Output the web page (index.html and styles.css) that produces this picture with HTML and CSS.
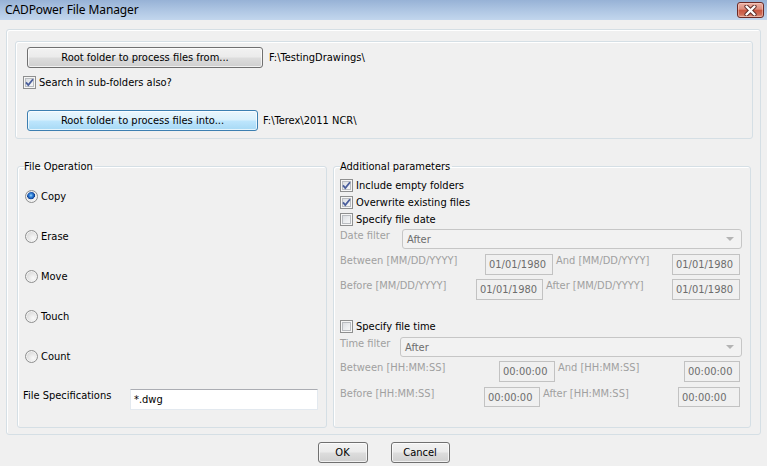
FILE: index.html
```html
<!DOCTYPE html>
<html lang="en">
<head>
<meta charset="utf-8">
<title>CADPower File Manager</title>
<link rel="stylesheet" href="styles.css">
</head>
<body>
<div class="window">
  <div class="titlebar">
    <span class="title">CADPower File Manager</span>
    <span class="close" aria-label="Close">
      <svg width="15" height="11" viewBox="0 0 15 11">
        <path d="M3.5 1.5 L11.5 9.5 M11.5 1.5 L3.5 9.5" stroke="#5a2a26" stroke-width="4.2" stroke-linecap="round" fill="none"/>
        <path d="M3.5 1.5 L11.5 9.5 M11.5 1.5 L3.5 9.5" stroke="#ffffff" stroke-width="2.4" stroke-linecap="round" fill="none"/>
      </svg>
    </span>
  </div>

  <div class="client">
    <div class="outer">
      <div class="topbox">
        <div class="row row-from">
          <span class="btn btn-from">Root folder to process files from...</span>
          <span class="path path-from">F:\TestingDrawings\</span>
        </div>
        <div class="check row-sub">
          <span class="cb checked"><svg width="11" height="11" viewBox="0 0 11 11"><path d="M2 5.3 L4.3 8 L9 2.2" stroke="#4a5e9c" stroke-width="1.8" fill="none"/></svg></span>
          <span>Search in sub-folders also?</span>
        </div>
        <div class="row row-into">
          <span class="btn hot btn-into">Root folder to process files into...</span>
          <span class="path path-into">F:\Terex\2011 NCR\</span>
        </div>
      </div>

      <div class="groups">
        <fieldset class="group ops">
          <legend>File Operation</legend>
          <div class="radios">
            <div class="radio-row"><span class="radio on"></span><span>Copy</span></div>
            <div class="radio-row"><span class="radio"></span><span>Erase</span></div>
            <div class="radio-row"><span class="radio"></span><span>Move</span></div>
            <div class="radio-row"><span class="radio"></span><span>Touch</span></div>
            <div class="radio-row"><span class="radio"></span><span>Count</span></div>
          </div>
          <div class="spec-row">
            <span class="spec-label">File Specifications</span>
            <span class="textbox">*.dwg</span>
          </div>
        </fieldset>

        <fieldset class="group params">
          <legend>Additional parameters</legend>
          <div class="check prow">
            <span class="cb checked"><svg width="11" height="11" viewBox="0 0 11 11"><path d="M2 5.3 L4.3 8 L9 2.2" stroke="#4a5e9c" stroke-width="1.8" fill="none"/></svg></span>
            <span>Include empty folders</span>
          </div>
          <div class="check prow">
            <span class="cb checked"><svg width="11" height="11" viewBox="0 0 11 11"><path d="M2 5.3 L4.3 8 L9 2.2" stroke="#4a5e9c" stroke-width="1.8" fill="none"/></svg></span>
            <span>Overwrite existing files</span>
          </div>
          <div class="check prow">
            <span class="cb"></span>
            <span>Specify file date</span>
          </div>

          <div class="frow date-filter">
            <span class="dl w62">Date filter</span>
            <span class="select w340"><span>After</span><span class="arrow"></span></span>
          </div>
          <div class="frow date-between">
            <span class="dl w145">Between [MM/DD/YYYY]</span>
            <span class="dbox w68 h21">01/01/1980</span>
            <span class="dl w116 ml3">And [MM/DD/YYYY]</span>
            <span class="dbox w68 h21">01/01/1980</span>
          </div>
          <div class="frow date-before">
            <span class="dl w136">Before [MM/DD/YYYY]</span>
            <span class="dbox w67 h21">01/01/1980</span>
            <span class="dl w126 ml3">After [MM/DD/YYYY]</span>
            <span class="dbox w68 h21">01/01/1980</span>
          </div>

          <div class="check prow time-check">
            <span class="cb"></span>
            <span>Specify file time</span>
          </div>
          <div class="frow time-filter">
            <span class="dl w60">Time filter</span>
            <span class="select w342"><span>After</span><span class="arrow"></span></span>
          </div>
          <div class="frow time-between">
            <span class="dl w159">Between [HH:MM:SS]</span>
            <span class="dbox w56 h21">00:00:00</span>
            <span class="dl w126 ml3">And [HH:MM:SS]</span>
            <span class="dbox w56 h21">00:00:00</span>
          </div>
          <div class="frow time-before">
            <span class="dl w144">Before [HH:MM:SS]</span>
            <span class="dbox w56 h20">00:00:00</span>
            <span class="dl w135 ml3">After [HH:MM:SS]</span>
            <span class="dbox w62 h20">00:00:00</span>
          </div>
        </fieldset>
      </div>
    </div>

    <div class="actions">
      <span class="btn btn-ok">OK</span>
      <span class="btn btn-cancel">Cancel</span>
    </div>
  </div>
</div>
</body>
</html>
```

FILE: styles.css
```css
* { box-sizing: border-box; }

html, body {
  margin: 0;
  padding: 0;
}

body {
  width: 767px;
  height: 466px;
  overflow: hidden;
  background: #f0f0f0;
  font-family: "DejaVu Sans Condensed", "DejaVu Sans", "Liberation Sans", sans-serif;
  font-size: 11px;
  line-height: 13px;
  color: #000;
}

.window {
  width: 767px;
  height: 466px;
  display: flex;
  flex-direction: column;
}

/* ---------- title bar ---------- */
.titlebar {
  height: 20px;
  flex: none;
  display: flex;
  justify-content: space-between;
  align-items: flex-start;
  padding: 0 3px 0 5px;
  background: linear-gradient(#97b2d6, #b2c9e5 60%, #c2d6ed);
}

.title {
  font-family: "Noto Sans", "Open Sans", sans-serif;
  font-size: 12px;
  line-height: 20px;
  color: #000;
  letter-spacing: -0.1px;
}

.close {
  margin-top: 2px;
  width: 27px;
  height: 16px;
  display: flex;
  align-items: center;
  justify-content: center;
  border: 1px solid #6b2a26;
  border-radius: 3px;
  background: linear-gradient(#ebb2a6 0%, #dc8c7b 45%, #c9553f 50%, #cf6a55 80%, #dd9a84 100%);
  box-shadow: inset 0 0 0 1px rgba(255, 220, 210, 0.45);
}

/* ---------- client ---------- */
.client {
  flex: 1;
  padding: 9px 6px 0 6px;
}

.outer {
  height: 406px;
  border: 1px solid #d5dfe5;
  border-radius: 3px;
  box-shadow: inset 1px 1px 0 #fff;
  padding: 11px 7px 0 8px;
}

.topbox {
  height: 98px;
  border: 1px solid #d5dfe5;
  border-radius: 3px;
  box-shadow: inset 1px 1px 0 #fff;
  padding: 5px 0 0 7px;
}

.row {
  display: flex;
  align-items: center;
}

.btn {
  display: flex;
  align-items: center;
  justify-content: center;
  height: 21px;
  border: 1px solid #707070;
  border-radius: 3px;
  background: linear-gradient(#f2f2f2 0%, #ebebeb 48%, #dddddd 52%, #cfcfcf 100%);
  box-shadow: inset 0 0 0 1px rgba(255, 255, 255, 0.7);
  color: #000;
  white-space: nowrap;
}

.btn.hot {
  border-color: #3c7fb1;
  background: linear-gradient(#eaf6fd 0%, #d9f0fc 48%, #bee6fd 52%, #a7d9f5 100%);
}

.btn-from { width: 236px; margin-left: 4px; }
.btn-into { width: 231px; margin-left: 4px; }

.path-from { margin-left: 6px; }
.path-into { margin-left: 5px; }

.check {
  display: flex;
  align-items: center;
  gap: 3px;
}

.row-sub { margin-top: 8px; height: 13px; }
.row-into { margin-top: 21px; }

.cb {
  width: 13px;
  height: 13px;
  flex: none;
  border: 1px solid #8e8f8f;
  background: linear-gradient(135deg, #d3d6db 0%, #eceef0 55%, #fbfbfb 100%);
  box-shadow: inset 0 0 0 1px #f6f6f6, inset 0 0 0 2px #b9bcc0;
  display: flex;
  align-items: center;
  justify-content: center;
}

.cb svg { display: block; }

/* ---------- groups ---------- */
.groups {
  display: flex;
  gap: 6px;
  margin-top: 21px;
  padding: 0 2px;
}

.group {
  margin: 0;
  height: 268px;
  border: 1px solid #d5dfe5;
  border-radius: 3px;
  box-shadow: inset 1px 1px 0 #fff;
  padding: 0 6px 0 6px;
  min-width: 0;
}

.group legend {
  padding: 0 2px 0 0;
  line-height: 13px;
  height: 13px;
}

.ops { width: 310px; flex: none; }
.params { flex: 1; }

/* file operation */
.radios {
  display: flex;
  flex-direction: column;
  gap: 20px;
  padding-top: 13px;
}

.radio-row {
  height: 20px;
  display: flex;
  align-items: center;
  gap: 3px;
  padding-left: 1px;
}

.radio {
  width: 13px;
  height: 13px;
  flex: none;
  border-radius: 50%;
  border: 1px solid #8e8f8f;
  background: radial-gradient(circle at 65% 65%, #fafafa 0%, #e6e6e6 45%, #c9c9c9 100%);
  box-shadow: inset 0 0 0 1px #f4f4f4;
}

.radio.on {
  background:
    radial-gradient(circle at 45% 40%, #a8dcff 0px, #3a8de0 1.5px, #174fa8 3.3px, #0e3d86 3.7px, rgba(14, 61, 134, 0) 4.2px),
    radial-gradient(circle at 65% 65%, #fafafa 0%, #e6e6e6 45%, #c9c9c9 100%);
}

.spec-row {
  margin-top: 23px;
  display: flex;
  align-items: flex-start;
  margin-left: -1px;
}

.spec-label { width: 107px; flex: none; }

.textbox {
  width: 188px;
  height: 21px;
  border: 1px solid #e3e9ef;
  border-top-color: #abadb3;
  background: #fff;
  padding: 0 3px;
  display: flex;
  align-items: center;
}

/* additional parameters */
.params { padding-top: 4px; }

.prow { height: 17px; }

.frow {
  display: flex;
  align-items: flex-start;
}

.dl {
  flex: none;
  color: #a0a0a0;
  white-space: nowrap;
}

.date-filter { margin-top: 1px; }
.date-between { margin-top: 5px; }
.date-before { margin-top: 4px; }
.time-check { margin-top: 18px; }
.time-filter { margin-top: 2px; }
.time-between { margin-top: 4px; }
.time-before { margin-top: 5px; }

.select {
  height: 20px;
  flex: none;
  border: 1px solid #c6c6c6;
  border-radius: 3px;
  background: #f2f2f2;
  color: #6d6d6d;
  display: flex;
  align-items: center;
  justify-content: space-between;
  padding: 0 7px 0 4px;
}

.arrow {
  width: 0;
  height: 0;
  border-left: 4px solid transparent;
  border-right: 4px solid transparent;
  border-top: 4px solid #b4b4b4;
}

.dbox {
  flex: none;
  border: 1px solid #c2c2c2;
  background: #f0f0f0;
  color: #6d6d6d;
  padding: 0 3px;
  display: flex;
  align-items: center;
  white-space: nowrap;
}

.h21 { height: 21px; }
.h20 { height: 20px; }
.ml3 { margin-left: 3px; }

.w56 { width: 56px; }
.w60 { width: 60px; }
.w62 { width: 62px; }
.w67 { width: 67px; }
.w68 { width: 68px; }
.w116 { width: 116px; }
.w126 { width: 126px; }
.w135 { width: 135px; }
.w136 { width: 136px; }
.w144 { width: 144px; }
.w145 { width: 145px; }
.w159 { width: 159px; }
.w340 { width: 340px; }
.w342 { width: 342px; }

/* ---------- dialog buttons ---------- */
.actions {
  margin-top: 7px;
  display: flex;
  justify-content: center;
  gap: 23px;
}

.btn-ok { width: 50px; }
.btn-cancel { width: 59px; }
```
